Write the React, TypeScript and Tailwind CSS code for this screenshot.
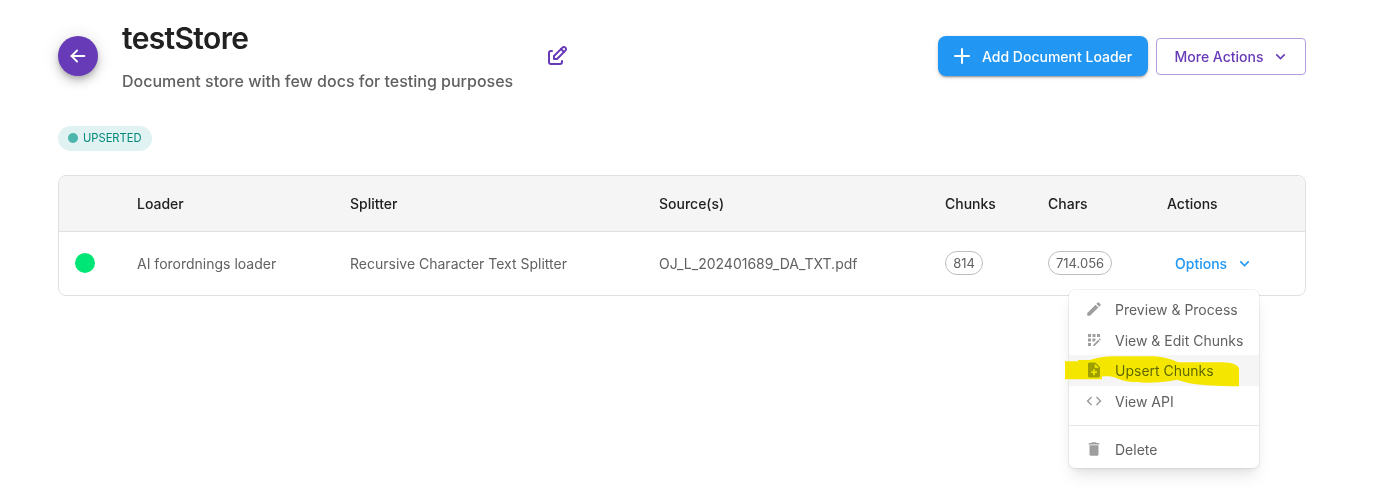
import { TbArrowLeft, TbEdit, TbPlus } from "react-icons/tb";
import {
  MdKeyboardArrowDown,
  MdEdit,
  MdAppRegistration,
  MdNoteAdd,
  MdCode,
  MdDelete,
} from "react-icons/md";
import type { IconType } from "react-icons";

function MenuItem({ icon: Icon, label, active = false }: { icon: IconType; label: string; active?: boolean }) {
  return (
    <div className={active ? "flex h-[30.75px] items-center bg-[#f5f5f5] pl-4" : "flex h-[30.75px] items-center pl-4"}>
      <Icon className="h-[18px] w-[18px] text-[#9e9e9e]" />
      <span className="ml-3 pt-[2px] whitespace-nowrap">{label}</span>
    </div>
  );
}

const columns = "grid grid-cols-[62px_213px_309px_286px_103px_119px_1fr] items-center";

export default function App() {
  return (
    <div className="h-[494px] w-[1373px] overflow-hidden bg-white pl-[58px] font-['Inter',sans-serif] text-sm text-[#616161]">
      <header className="flex h-[126px] w-[1248px] items-start">
        <button className="mt-9 flex h-10 w-10 items-center justify-center rounded-full bg-[#673ab7] text-white shadow-[0_3px_5px_-1px_rgba(0,0,0,0.2),0_6px_10px_rgba(0,0,0,0.14),0_1px_18px_rgba(0,0,0,0.12)]">
          <TbArrowLeft className="h-[22px] w-[22px]" />
        </button>
        <div className="ml-6 w-[423px] pt-4">
          <h1 className="text-[30px] leading-[44px] font-semibold tracking-[-0.65px] text-[#212121]">testStore</h1>
          <p className="mt-[9px] text-base leading-6 font-medium">Document store with few docs for testing purposes</p>
        </div>
        <TbEdit className="mt-11 h-6 w-6 text-[#673ab7]" />
        <div className="ml-auto flex items-center gap-2 pt-9">
          <button className="flex h-10 w-[210px] items-center rounded-lg bg-[#2196f3] pl-3 font-medium text-white shadow-[0_3px_1px_-2px_rgba(0,0,0,0.2),0_2px_2px_rgba(0,0,0,0.14),0_1px_5px_rgba(0,0,0,0.12)]">
            <TbPlus className="h-6 w-6" strokeWidth={2} />
            <span className="ml-2 pt-0.5 whitespace-nowrap">Add Document Loader</span>
          </button>
          <button className="flex h-[37px] w-[150px] items-center rounded-[4px] border border-[#b39ddb] pl-[17.5px] font-medium text-[#673ab7]">
            <span className="pt-0.5">More Actions</span>
            <MdKeyboardArrowDown className="ml-2 h-[19px] w-[19px]" />
          </button>
        </div>
      </header>

      <div className="flex h-[25px] w-[94px] items-center rounded-full bg-[#e0f2f1] pl-2.5 text-[11.2px] text-[#00897b]">
        <span className="mr-[5px] mb-px h-2.5 w-2.5 rounded-full bg-[#4db6ac]" />
        <span className="pb-px">UPSERTED</span>
      </div>

      <section className="relative mt-6 h-[121px] w-[1248px] rounded-lg border border-[#e0e0e0]">
        <div className={`${columns} h-14 rounded-t-[7px] border-b border-[#e0e0e0] bg-[#f5f5f5] pl-4 font-medium text-[#212121]`}>
          <span />
          <span>Loader</span>
          <span>Splitter</span>
          <span>Source(s)</span>
          <span>Chunks</span>
          <span>Chars</span>
          <span>Actions</span>
        </div>
        <div className={`${columns} h-[63px] pl-4`}>
          <span className="mb-0.5 h-5 w-5 rounded-full bg-[#00e676]" />
          <span>AI forordnings loader</span>
          <span>Recursive Character Text Splitter</span>
          <span>OJ_L_202401689_DA_TXT.pdf</span>
          <span className="mb-0.5 flex h-6 w-[38px] items-center justify-center rounded-full border border-[#bdbdbd] pt-px text-[13px]">814</span>
          <span className="mb-0.5 flex h-6 w-16 items-center justify-center rounded-full border border-[#bdbdbd] pt-px text-[13px]">714.056</span>
          <span className="flex items-center pl-2 font-medium text-[#2196f3]">
            Options
            <MdKeyboardArrowDown className="mb-px ml-2 h-[19px] w-[19px]" />
          </span>
        </div>

        <div className="absolute top-[113.5px] left-[1010px] h-[178px] w-[190px] rounded-md bg-white pt-1 shadow-[0_0_0_1px_rgba(0,0,0,0.05),0_10px_15px_-3px_rgba(0,0,0,0.1),0_4px_6px_-2px_rgba(0,0,0,0.05)]">
          <MenuItem icon={MdEdit} label="Preview & Process" />
          <MenuItem icon={MdAppRegistration} label="View & Edit Chunks" />
          <MenuItem icon={MdNoteAdd} label="Upsert Chunks" active />
          <MenuItem icon={MdCode} label="View API" />
          <div className="mt-[8.5px] mb-2 h-px bg-[#e8e8e8]" />
          <MenuItem icon={MdDelete} label="Delete" />
          <svg className="pointer-events-none absolute top-[65.5px] -left-1 mix-blend-darken" width="176" height="34" viewBox="0 0 176 34">
            <path
              d="M0 6.3H13V5H25C33 2.5 40 1.3 48 1.3H84C95 1.3 104 3 113 7.3H158C167 7.3 174 10.5 174 14V31.3C155 31.3 128 31 112 24.8C101 27 92 27.7 82 27.7C67 27.7 57 26 50 22.5C46 21.2 42 21 37 21.5V24.3H0Z"
              fill="#f6e600"
            />
          </svg>
        </div>
      </section>
    </div>
  );
}
